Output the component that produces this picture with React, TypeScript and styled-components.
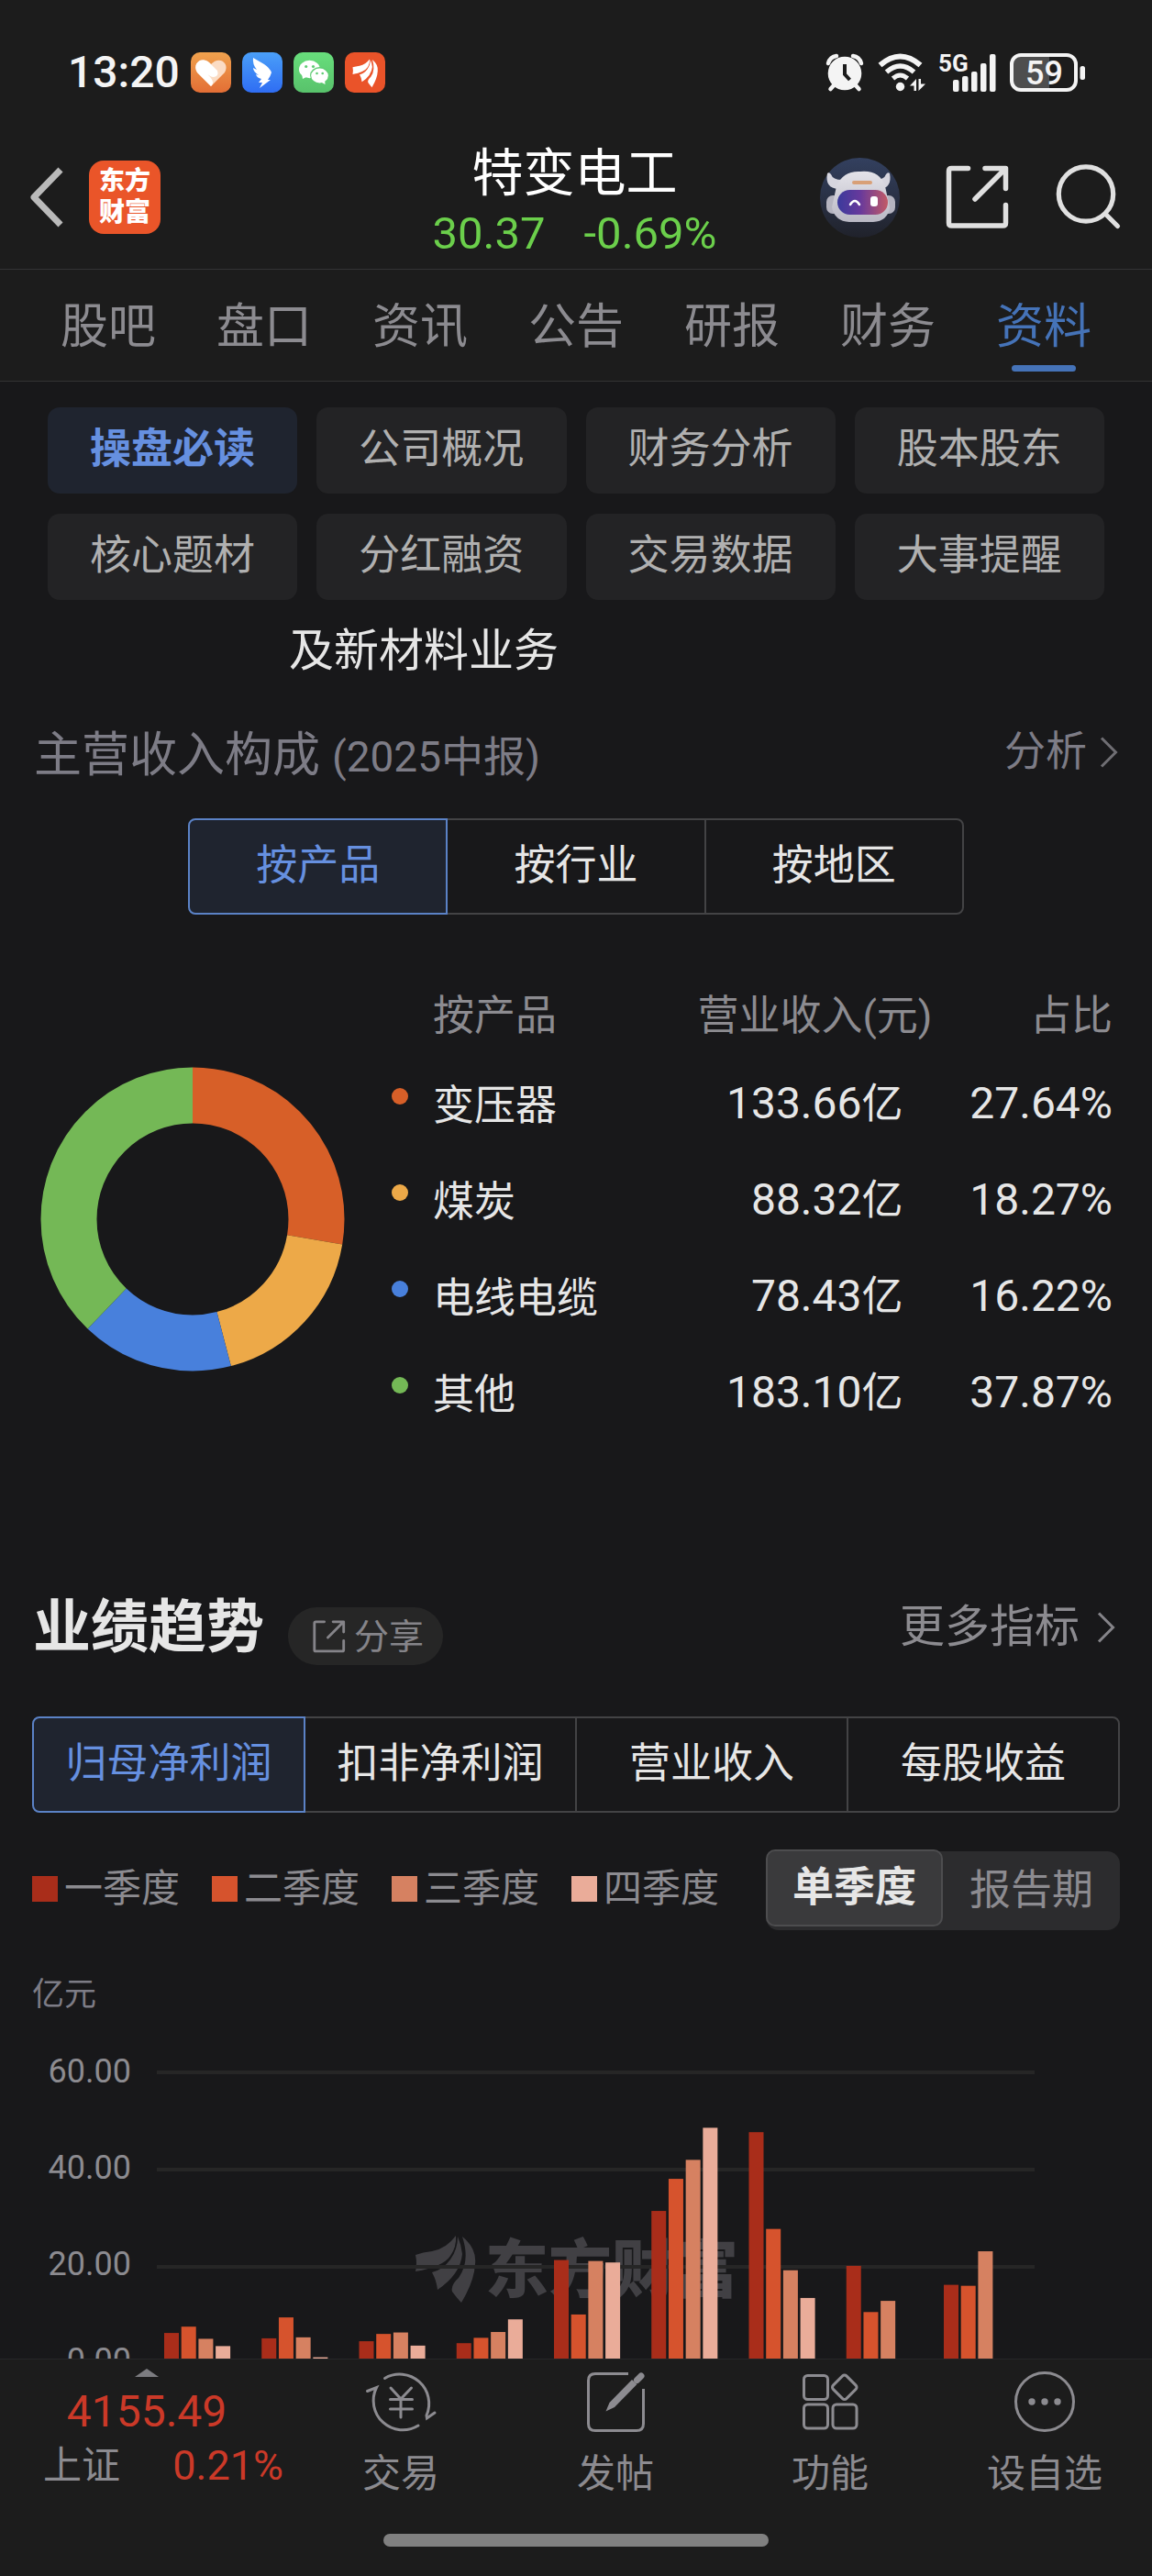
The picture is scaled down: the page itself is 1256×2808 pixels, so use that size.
import React, { useState } from "react";
import styled, { createGlobalStyle } from "styled-components";

const color = {
  page: "#18181a",
  bar: "#1c1c1c",
  line: "#333334",
  text: "#e6e6e6",
  muted: "#8c8b90",
  dim: "#7d7c86",
  blue: "#6690e0",
  blueBg: "#1f242f",
  green: "#6bcf4b",
  red: "#cb3928",
  quarters: ["#a92d1a", "#d6532d", "#d68161", "#eaac99"],
};

const GlobalStyle = createGlobalStyle`
  * { box-sizing: border-box; }
  body {
    margin: 0;
    background: ${color.page};
    color: ${color.text};
    font-family: Roboto, "Noto Sans CJK SC", sans-serif;
  }
  button {
    margin: 0;
    padding: 0;
    border: 0;
    background: none;
    color: inherit;
    font: inherit;
    cursor: pointer;
  }
  a { color: inherit; text-decoration: none; }
  svg { display: block; flex: none; overflow: visible; }
`;

const Screen = styled.div`
  display: flex;
  flex-direction: column;
  height: 100vh;
`;

const TopArea = styled.header`
  background: ${color.bar};
`;

const StatusBar = styled.div`
  display: flex;
  align-items: center;
  justify-content: space-between;
  height: 157px;
  padding: 0 73px 0 74px;
`;

const StatusGroup = styled.div<{ $gap: number }>`
  display: flex;
  align-items: center;
  gap: ${(p) => p.$gap}px;
`;

const Clock = styled.time`
  font-size: 48px;
  line-height: 56px;
  font-weight: 500;
  color: #f4f4f4;
`;

const TitleBar = styled.div`
  display: grid;
  grid-template-columns: 1fr auto 1fr;
  height: 137px;
  padding: 0 35px 0 32px;
  border-bottom: 1px solid ${color.line};
`;

const TitleSide = styled.div<{ $end?: boolean }>`
  display: flex;
  align-items: center;
  justify-content: ${(p) => (p.$end ? "flex-end" : "flex-start")};
  gap: ${(p) => (p.$end ? 50 : 29)}px;
  height: 116px;
`;

const BrandLink = styled.a`
  display: grid;
  place-content: center;
  width: 78px;
  height: 80px;
  border-radius: 16px;
  background: #ea5529;
  color: #fff;
  font-size: 28px;
  line-height: 34px;
  font-weight: 900;
  text-align: center;
`;

const StockName = styled.h1`
  margin: 0;
  font-size: 56px;
  line-height: 65px;
  font-weight: 400;
  color: #fff;
  text-align: center;
`;

const Quote = styled.div`
  display: flex;
  justify-content: center;
  gap: 42px;
  font-size: 49px;
  line-height: 65px;
  color: ${color.green};
`;

const TabBar = styled.nav`
  display: flex;
  height: 122px;
  padding: 0 33px;
  border-bottom: 1px solid ${color.line};
`;

const Tab = styled.button<{ $active: boolean }>`
  position: relative;
  flex: 1;
  padding-top: 4px;
  font-size: 52px;
  line-height: 60px;
  color: ${(p) => (p.$active ? "#4573b8" : color.muted)};

  &::after {
    content: "";
    display: ${(p) => (p.$active ? "block" : "none")};
    position: absolute;
    left: 50%;
    bottom: 10px;
    width: 70px;
    height: 7px;
    margin-left: -35px;
    border-radius: 4px;
    background: #4573b8;
  }
`;

const Main = styled.main`
  flex: 1;
  min-height: 0;
  overflow: hidden;
`;

const ChipGrid = styled.div`
  display: grid;
  grid-template-columns: repeat(4, 1fr);
  gap: 22px 21px;
  padding: 28px 52px 0;
`;

const Chip = styled.button<{ $active: boolean }>`
  height: 94px;
  padding-bottom: 2px;
  border-radius: 13px;
  background: ${(p) => (p.$active ? color.blueBg : "#232325")};
  color: ${(p) => (p.$active ? color.blue : "#b0b0b0")};
  font-size: 45px;
  line-height: 60px;
  font-weight: ${(p) => (p.$active ? 700 : 400)};
`;

const Business = styled.p`
  margin: 22px 36px 0 315px;
  font-size: 49px;
  line-height: 68px;
`;

const SectionHead = styled.div`
  display: flex;
  align-items: flex-start;
  justify-content: space-between;
  height: 68px;
  margin-top: 46px;
  padding: 0 37px;
`;

const SubTitle = styled.h2`
  margin: 0;
  font-size: 52px;
  line-height: 68px;
  font-weight: 400;
  color: ${color.dim};

  small { font-size: 46px; line-height: 1; }
`;

const MoreLink = styled.a<{ $large?: boolean }>`
  display: flex;
  align-items: center;
  gap: ${(p) => (p.$large ? 19 : 14)}px;
  font-size: ${(p) => (p.$large ? 49 : 45)}px;
  line-height: 60px;
  color: ${(p) => (p.$large ? color.muted : color.dim)};
`;

const Segments = styled.div<{ $inset: number; $top: number }>`
  display: flex;
  height: 105px;
  margin: ${(p) => p.$top}px ${(p) => p.$inset}px 0;
`;

const Segment = styled.button<{ $active: boolean }>`
  position: relative;
  z-index: ${(p) => (p.$active ? 1 : 0)};
  flex: 1;
  padding-bottom: 2px;
  border: 2px solid ${(p) => (p.$active ? "#5b82c6" : "#434345")};
  background: ${(p) => (p.$active ? color.blueBg : "transparent")};
  color: ${(p) => (p.$active ? color.blue : color.text)};
  font-size: 45px;
  line-height: 60px;

  & + & { margin-left: -2px; }
  &:first-child { border-radius: 8px 0 0 8px; }
  &:last-child { border-radius: 0 8px 8px 0; }
`;

const Composition = styled.section`
  display: flex;
  align-items: flex-start;
  gap: 51px;
  margin-top: 65px;
  padding: 0 43px 0 44px;
`;

const DonutWrap = styled.div`
  padding-top: 101px;
`;

const Table = styled.table`
  flex: 1;
  table-layout: fixed;
  border-collapse: collapse;
  font-size: 45px;
  line-height: 48px;

  th, td { padding: 0; text-align: right; font-weight: 400; }
  th { height: 91px; color: ${color.muted}; }
  td { height: 105px; font-size: 48px; }
  td:not(:first-child) { padding-bottom: 5px; }
  th:first-child { width: 35%; padding-left: 45px; text-align: left; }
  th:nth-child(2) { width: 40%; }
  td:nth-child(2) { padding-right: 32px; }
`;

const Unit = styled.span`
  font-size: 45px;
  line-height: 1;
`;

const Product = styled.div`
  display: flex;
  align-items: flex-start;
  gap: 27px;
  font-size: 45px;
`;

const Dot = styled.i<{ $color: string }>`
  width: 18px;
  height: 18px;
  margin-top: 4px;
  border-radius: 50%;
  background: ${(p) => p.$color};
`;

const TrendHead = styled.div`
  display: flex;
  align-items: center;
  justify-content: space-between;
  height: 82px;
  margin-top: 160px;
  padding: 0 40px 0 36px;
`;

const TrendTitle = styled.div`
  display: flex;
  align-items: flex-end;
  gap: 26px;
`;

const Heading = styled.h2`
  margin: 0;
  font-size: 63px;
  line-height: 82px;
  font-weight: 700;
`;

const ShareButton = styled.button`
  display: flex;
  align-items: center;
  gap: 9px;
  height: 63px;
  padding: 0 21px 0 27px;
  border-radius: 32px;
  background: #262626;
  color: #858489;
  font-size: 38px;
  line-height: 60px;
`;

const LegendRow = styled.div`
  display: flex;
  align-items: center;
  justify-content: space-between;
  margin-top: 42px;
  padding: 0 35px;
`;

const Legend = styled.ul`
  display: flex;
  gap: 35px;
  margin: 0;
  padding: 0 0 4px;
  list-style: none;
`;

const LegendItem = styled.li<{ $color: string }>`
  display: flex;
  align-items: center;
  gap: 7px;
  font-size: 42px;
  line-height: 60px;
  color: ${color.muted};

  &::before {
    content: "";
    width: 28px;
    height: 28px;
    background: ${(p) => p.$color};
  }
`;

const Toggle = styled.div`
  display: flex;
  align-items: flex-start;
  width: 386px;
  height: 86px;
  border-radius: 14px;
  background: #2c2c2e;
`;

const ToggleButton = styled.button<{ $active: boolean }>`
  width: 50%;
  height: ${(p) => (p.$active ? 84 : 86)}px;
  margin-top: ${(p) => (p.$active ? -2 : 0)}px;
  border: ${(p) => (p.$active ? "2px solid #4d4d4f" : "0")};
  border-radius: 10px;
  background: ${(p) => (p.$active ? "#3a3a3c" : "transparent")};
  color: ${(p) => (p.$active ? color.text : color.muted)};
  font-size: 45px;
  line-height: 60px;
  font-weight: ${(p) => (p.$active ? 700 : 400)};
`;

const AxisUnit = styled.p`
  margin: 46px 35px 0;
  font-size: 35px;
  line-height: 50px;
  color: ${color.dim};
`;

const ChartWrap = styled.div`
  padding: 0 35px;

  svg { width: 100%; height: auto; }
  text { font-family: Roboto, "Noto Sans CJK SC", sans-serif; }
`;

const BottomBar = styled.footer`
  height: 237px;
  border-top: 1px solid #262628;
  background: ${color.bar};
`;

const BottomItems = styled.nav`
  display: flex;
  height: 190px;
`;

const IndexButton = styled.button`
  display: flex;
  flex-direction: column;
  align-items: center;
  width: 320px;
  padding-top: 10px;
  font-size: 48px;
  line-height: 60px;
  color: ${color.red};

  svg { margin-bottom: 8px; }
`;

const IndexRow = styled.span`
  display: flex;
  justify-content: space-between;
  align-self: stretch;
  padding: 0 11px 0 47px;
  font-size: 45px;
  line-height: 58px;
`;

const IndexName = styled.span`
  font-size: 42px;
  color: ${color.muted};
`;

const BottomItem = styled.button`
  display: flex;
  flex: 1;
  flex-direction: column;
  align-items: center;
  gap: 15px;
  padding-top: 12px;
  font-size: 42px;
  line-height: 60px;
  color: ${color.muted};
`;

const HomeIndicator = styled.div`
  width: 33.4%;
  height: 14px;
  margin: 0 auto;
  border-radius: 7px;
  background: #808080;
`;

/* ---------- icons ---------- */

const FEATHERS = [
  "M0 21Q8 18 18 17Q34 14 44 0Q45 12 38 22Q30 34 0 39Q2 30 0 21Z",
  "M46 1Q50 10 51 20Q49 42 24 59Q23 49 18 40Q30 37 38 26Q46 15 46 1Z",
  "M51 1Q67 14 65 31Q64 50 50 73Q46 69 40 61Q38 54 47 46Q60 28 51 1Z",
];

const AppIcons = () => (
  <>
    <svg width="44" height="44" viewBox="0 0 44 44">
      <defs>
        <linearGradient id="health" x1="0" y1="0" x2="0" y2="1">
          <stop offset="0" stopColor="#f0a24e" />
          <stop offset="1" stopColor="#e36e35" />
        </linearGradient>
      </defs>
      <rect width="44" height="44" rx="10" fill="url(#health)" />
      <path d="M22 37L7 22C1 12 13 3 22 13C31 3 43 12 37 22Z" fill="#fbdcc4" />
      <path d="M22 37L7 22C1 12 12 4 20 11L29 20Q31 26 25 27Q21 27 16 22Q28 32 22 37Z" fill="#fff" />
    </svg>
    <svg width="44" height="44" viewBox="0 0 44 44">
      <defs>
        <linearGradient id="wing" x1="0" y1="0" x2="0" y2="1">
          <stop offset="0" stopColor="#4a9ff8" />
          <stop offset="1" stopColor="#2f6df3" />
        </linearGradient>
      </defs>
      <rect width="44" height="44" rx="10" fill="url(#wing)" />
      <path
        d="M12 6L24 13Q30 17 32 22Q31 26 28 30H31L19 39L22 33H18L21 29Q16 28 15 24L18 25Q12 21 12 17L16 19Q11 13 12 6Z"
        fill="#fff"
      />
    </svg>
    <svg width="44" height="44" viewBox="0 0 44 44">
      <defs>
        <linearGradient id="chat" x1="0" y1="0" x2="0" y2="1">
          <stop offset="0" stopColor="#68de7c" />
          <stop offset="1" stopColor="#58c26b" />
        </linearGradient>
      </defs>
      <rect width="44" height="44" rx="10" fill="url(#chat)" />
      <path d="M9 23L10 29L16 26Z" fill="#fff" />
      <ellipse cx="17.500" cy="18.500" rx="11.500" ry="9.700" fill="#fff" />
      <ellipse cx="28.500" cy="25" rx="10.500" ry="9" fill="#5fcc73" />
      <path d="M29 32L34.500 35L34 29Z" fill="#fff" />
      <ellipse cx="28.500" cy="25.500" rx="9.300" ry="7.900" fill="#fff" />
      <g fill="#5fcc73">
        <circle cx="13.700" cy="15.500" r="1.600" />
        <circle cx="21.500" cy="15.500" r="1.600" />
        <circle cx="25.500" cy="23" r="1.300" />
        <circle cx="31.700" cy="23" r="1.300" />
      </g>
    </svg>
    <svg width="44" height="44" viewBox="0 0 44 44">
      <rect width="44" height="44" rx="10" fill="#ea5329" />
      <g transform="translate(8.500 7.500) scale(.42)" fill="#fff">
        {FEATHERS.map((d) => <path key={d} d={d} />)}
      </g>
    </svg>
  </>
);

const AlarmIcon = () => (
  <svg width="40" height="42" viewBox="0 0 40 42" fill="none" stroke="#f4f4f4">
    <circle cx="20" cy="22" r="18.300" fill="#f4f4f4" stroke="none" />
    <path d="M2 11Q4 4 11 3" strokeWidth="4.500" strokeLinecap="round" />
    <path d="M38 11Q36 4 29 3" strokeWidth="4.500" strokeLinecap="round" />
    <path d="M9 34L4.500 39M31 34L35.500 39" strokeWidth="4.500" strokeLinecap="round" />
    <path d="M20 12V23L25.500 29" stroke="#1c1c1c" strokeWidth="4" />
  </svg>
);

const WifiIcon = () => (
  <svg width="52" height="42" viewBox="0 0 52 42" fill="none" stroke="#f4f4f4">
    <path d="M2.500 13Q24.500 -6 46.500 13" strokeWidth="6" />
    <path d="M9.500 20.500Q24.500 7.500 39.500 20.500" strokeWidth="5.500" />
    <path d="M16.500 27.500Q24.500 20.500 32.500 27.500" strokeWidth="5" />
    <circle cx="24.500" cy="36.500" r="4.700" fill="#f4f4f4" stroke="none" />
    <path d="M42 41V28L35 35.500H39.500V41ZM44.500 28V41L52 33.500H47V28Z" fill="#f4f4f4" stroke="none" />
  </svg>
);

const SignalIcon = () => (
  <svg width="60" height="42" viewBox="0 0 60 42" fill="#f4f4f4">
    <text x="-2" y="20" fontSize="26" fontWeight="700">
      5G
    </text>
    {[29, 25, 20, 11, 1].map((y, i) => (
      <rect key={y} x={14 + i * 10} y={y} width="6.500" height={42 - y} rx="2" />
    ))}
  </svg>
);

const BatteryIcon = () => (
  <svg width="82" height="42" viewBox="0 0 82 42">
    <path d="M12 2H43V40H12Q2 40 2 30V12Q2 2 12 2Z" fill="#4e4e4e" />
    <rect x="2" y="2" width="70" height="38" rx="10" fill="none" stroke="#f4f4f4" strokeWidth="4" />
    <rect x="76.500" y="14" width="5.500" height="15" rx="2.500" fill="#f4f4f4" />
    <text x="37.500" y="34" fontSize="36" fontWeight="500" textAnchor="middle" fill="#f4f4f4">
      59
    </text>
  </svg>
);

const BackIcon = () => (
  <svg width="36" height="66" viewBox="0 0 36 66" fill="none" stroke="#bababa" strokeWidth="7">
    <path d="M34 3L5 33L34 63" strokeLinejoin="round" />
  </svg>
);

const RobotIcon = () => (
  <svg width="87" height="87" viewBox="0 0 87 87">
    <defs>
      <linearGradient id="sky" x1="0" y1="0" x2="0" y2="1">
        <stop offset="0" stopColor="#33405f" />
        <stop offset="1" stopColor="#20222b" />
      </linearGradient>
      <linearGradient id="visor" x1="0" y1="0" x2="1" y2="0">
        <stop offset="0" stopColor="#3b3a9c" />
        <stop offset=".45" stopColor="#67399c" />
        <stop offset="1" stopColor="#c25a66" />
      </linearGradient>
      <linearGradient id="shell" x1="0" y1="0" x2="0" y2="1">
        <stop offset="0" stopColor="#e4e3e9" />
        <stop offset="1" stopColor="#b9b8c4" />
      </linearGradient>
    </defs>
    <circle cx="43.500" cy="43.500" r="43.500" fill="url(#sky)" />
    <path d="M20 34Q5 33 8 17Q10 15 12 18Q14 24 24 24ZM65 34Q79 33 76 17Q74 15 72 18Q70 24 60 24Z" fill="#d6d5de" />
    <rect x="7" y="41" width="15" height="20" rx="7" fill="#b5b4c0" />
    <rect x="67" y="41" width="15" height="20" rx="7" fill="#b5b4c0" />
    <path d="M44 15Q65 13 71 31L76 54Q74 69 58 70H32Q16 69 13 54L18 31Q25 14 44 15Z" fill="url(#shell)" />
    <path d="M37 27H55" stroke="#d8a077" strokeWidth="4" strokeLinecap="round" />
    <rect x="19" y="35" width="55" height="27" rx="13.500" fill="url(#visor)" />
    <path d="M33 51Q38 43 43 51" fill="none" stroke="#fff" strokeWidth="2.500" strokeLinecap="round" />
    <rect x="55" y="42" width="8" height="11" rx="3" fill="#fff" />
  </svg>
);

const ShareIcon = ({ size, tone }: { size: number; tone: string }) => (
  <svg
    width={size}
    height={size}
    viewBox="0 0 70 70"
    fill="none"
    stroke={tone}
    strokeWidth="5.500"
    strokeLinecap="round"
    strokeLinejoin="round"
  >
    <path d="M24.500 3.500H6.500Q3.500 3.500 3.500 6.500V63Q3.500 66 6.500 66H62.500Q65.500 66 65.500 63V43.500" />
    <path d="M43 3.500H65.500V25.500M32 37L64 5" />
  </svg>
);

const SearchIcon = () => (
  <svg width="70" height="70" viewBox="0 0 70 70" fill="none" stroke="#e0e0e0" strokeWidth="5.200" strokeLinecap="round">
    <circle cx="33" cy="31.500" r="29.700" />
    <path d="M54.500 53.500L67.500 66.500" />
  </svg>
);

const ChevronIcon = ({ tone }: { tone: string }) => (
  <svg width="20" height="34" viewBox="0 0 20 34" fill="none" stroke={tone} strokeWidth="3">
    <path d="M2 1.500L17.500 17L2 32.500" />
  </svg>
);

const bottomIcon = { width: 76, height: 68, viewBox: "0 0 76 68", fill: "none", stroke: color.muted, strokeWidth: 3 } as const;

const TradeIcon = () => (
  <svg {...bottomIcon} strokeLinecap="round">
    <path d="M20.500 8.500A32 32 0 0 1 66 49L66.500 52L75 46" />
    <path d="M1.500 22.500L11.500 18.500A32 32 0 0 0 57 60" />
    <path d="M27 19L38 31L49.500 19M38 31V51M26.500 31.500H50.500M26.500 42H50.500" />
  </svg>
);

const PostIcon = () => (
  <svg {...bottomIcon}>
    <path d="M52 3.500H16Q8.500 3.500 8.500 11V58Q8.500 65.500 16 65.500H61Q68.500 65.500 68.500 58V20" />
    <path d="M27.500 44.500L31.500 35L56 10L61.500 15L37 40Z" fill={color.muted} stroke="none" />
    <path d="M61.500 10.500L66 6" strokeWidth="7" strokeLinecap="round" />
  </svg>
);

const FeaturesIcon = () => (
  <svg {...bottomIcon}>
    <rect x="9.500" y="5.500" width="26" height="26" rx="4" />
    <rect x="9.500" y="37" width="26" height="26" rx="4" />
    <rect x="41" y="37" width="26" height="26" rx="4" />
    <rect x="43.500" y="8" width="20.500" height="20.500" rx="3" transform="rotate(45 53.750 18.250)" />
  </svg>
);

const MoreIcon = () => (
  <svg {...bottomIcon}>
    <circle cx="38" cy="34" r="31.500" />
    {[24, 38, 52].map((x) => (
      <circle key={x} cx={x} cy="34" r="3.700" fill={color.muted} stroke="none" />
    ))}
  </svg>
);

/* ---------- data ---------- */

const tabs = ["股吧", "盘口", "资讯", "公告", "研报", "财务", "资料"];
const chips = ["操盘必读", "公司概况", "财务分析", "股本股东", "核心题材", "分红融资", "交易数据", "大事提醒"];
const groupings = ["按产品", "按行业", "按地区"];
const metrics = ["归母净利润", "扣非净利润", "营业收入", "每股收益"];
const quarterNames = ["一季度", "二季度", "三季度", "四季度"];

const products = [
  { name: "变压器", revenue: "133.66", share: 27.64, color: "#d75f28" },
  { name: "煤炭", revenue: "88.32", share: 18.27, color: "#eda948" },
  { name: "电线电缆", revenue: "78.43", share: 16.22, color: "#4880dc" },
  { name: "其他", revenue: "183.10", share: 37.87, color: "#74b856" },
];

const profits = [
  [6.4, 7.7, 5.2, 3.7],
  [5.3, 9.6, 5.5, 1.4],
  [4.7, 6.2, 6.5, 3.8],
  [4.3, 5.4, 6.6, 9.2],
  [21.4, 10.2, 21.2, 20.9],
  [31.5, 38.1, 42, 48.6],
  [47.7, 27.8, 19.3, 13.6],
  [20.2, 10.7, 13],
  [16.3, 16.1, 23.2],
];

/* ---------- charts ---------- */

const Donut = () => {
  const radius = 135;
  const length = 2 * Math.PI * radius;
  let start = 0;
  return (
    <svg width="332" height="332" viewBox="0 0 332 332" role="img" aria-label="主营收入构成">
      <g fill="none" strokeWidth="61" transform="rotate(-90 166 166)">
        {products.map((item) => {
          const offset = start;
          start += item.share;
          return (
            <circle
              key={item.name}
              cx="166"
              cy="166"
              r={radius}
              stroke={item.color}
              strokeDasharray={`${(item.share / 100) * length} ${length}`}
              strokeDashoffset={(-offset / 100) * length}
            />
          );
        })}
      </g>
    </svg>
  );
};

const BASELINE = 377;
const UNIT = 5.3;

const ProfitChart = () => (
  <ChartWrap>
    <svg viewBox="0 0 1186 400" role="img" aria-label="归母净利润">
      <g fill="#414044">
        <g transform="translate(418 237)">
          {FEATHERS.map((d) => <path key={d} d={d} />)}
        </g>
        <text x="494" y="299" fontSize="69" fontWeight="900">东方财富</text>
      </g>
      {[60, 40, 20, 0].map((value) => (
        <g key={value}>
          <rect x="136" y={BASELINE - value * UNIT - 2} width="957" height="4" fill="#262626" />
          <text x="108" y={BASELINE + 8 - value * 5.25} fontSize="36" textAnchor="end" fill={color.muted}>
            {value.toFixed(2)}
          </text>
        </g>
      ))}
      {profits.map((year, g) =>
        year.map((value, q) => (
          <rect
            key={`${g}-${q}`}
            x={144 + g * 106.25 + q * 18.7}
            y={BASELINE - value * UNIT}
            width="16"
            height={value * UNIT}
            fill={color.quarters[q]}
          />
        ))
      )}
    </svg>
  </ChartWrap>
);

/* ---------- page ---------- */

export default function App() {
  const [tab, setTab] = useState("资料");
  const [chip, setChip] = useState("操盘必读");
  const [grouping, setGrouping] = useState("按产品");
  const [metric, setMetric] = useState("归母净利润");
  const [period, setPeriod] = useState("单季度");

  return (
    <Screen>
      <GlobalStyle />
      <TopArea>
        <StatusBar>
          <StatusGroup $gap={12}>
            <Clock>13:20</Clock>
            <AppIcons />
          </StatusGroup>
          <StatusGroup $gap={16}>
            <AlarmIcon />
            <WifiIcon />
            <SignalIcon />
            <BatteryIcon />
          </StatusGroup>
        </StatusBar>
        <TitleBar>
          <TitleSide>
            <button aria-label="返回"><BackIcon /></button>
            <BrandLink href="#home">东方<br />财富</BrandLink>
          </TitleSide>
          <div>
            <StockName>特变电工</StockName>
            <Quote>
              <span>30.37</span>
              <span>-0.69%</span>
            </Quote>
          </div>
          <TitleSide $end>
            <button aria-label="智能助手"><RobotIcon /></button>
            <button aria-label="分享"><ShareIcon size={70} tone="#e0e0e0" /></button>
            <button aria-label="搜索"><SearchIcon /></button>
          </TitleSide>
        </TitleBar>
        <TabBar>
          {tabs.map((name) => (
            <Tab key={name} $active={name === tab} onClick={() => setTab(name)}>{name}</Tab>
          ))}
        </TabBar>
      </TopArea>

      <Main>
        <ChipGrid>
          {chips.map((name) => (
            <Chip key={name} $active={name === chip} onClick={() => setChip(name)}>{name}</Chip>
          ))}
        </ChipGrid>
        <Business>及新材料业务</Business>

        <SectionHead>
          <SubTitle>主营收入构成 <small>(2025中报)</small></SubTitle>
          <MoreLink href="#analysis">分析<ChevronIcon tone="#6f6e73" /></MoreLink>
        </SectionHead>
        <Segments $inset={205} $top={34}>
          {groupings.map((name) => (
            <Segment key={name} $active={name === grouping} onClick={() => setGrouping(name)}>{name}</Segment>
          ))}
        </Segments>

        <Composition>
          <DonutWrap><Donut /></DonutWrap>
          <Table>
            <thead>
              <tr><th>按产品</th><th>营业收入(元)</th><th>占比</th></tr>
            </thead>
            <tbody>
              {products.map((item) => (
                <tr key={item.name}>
                  <td><Product><Dot $color={item.color} />{item.name}</Product></td>
                  <td>{item.revenue}<Unit>亿</Unit></td>
                  <td>{item.share.toFixed(2)}%</td>
                </tr>
              ))}
            </tbody>
          </Table>
        </Composition>

        <TrendHead>
          <TrendTitle>
            <Heading>业绩趋势</Heading>
            <ShareButton><ShareIcon size={36} tone="#858489" />分享</ShareButton>
          </TrendTitle>
          <MoreLink $large href="#metrics">更多指标<ChevronIcon tone="#858489" /></MoreLink>
        </TrendHead>
        <Segments $inset={35} $top={56}>
          {metrics.map((name) => (
            <Segment key={name} $active={name === metric} onClick={() => setMetric(name)}>{name}</Segment>
          ))}
        </Segments>

        <LegendRow>
          <Legend>
            {quarterNames.map((name, i) => (
              <LegendItem key={name} $color={color.quarters[i]}>{name}</LegendItem>
            ))}
          </Legend>
          <Toggle>
            {["单季度", "报告期"].map((name) => (
              <ToggleButton key={name} $active={name === period} onClick={() => setPeriod(name)}>{name}</ToggleButton>
            ))}
          </Toggle>
        </LegendRow>
        <AxisUnit>亿元</AxisUnit>
        <ProfitChart />
      </Main>

      <BottomBar>
        <BottomItems>
          <IndexButton>
            <svg width="26" height="9" viewBox="0 0 26 9"><path d="M0 9L13 0L26 9Z" fill="#7c7c80" /></svg>
            <span>4155.49</span>
            <IndexRow><IndexName>上证</IndexName><span>0.21%</span></IndexRow>
          </IndexButton>
          <BottomItem><TradeIcon />交易</BottomItem>
          <BottomItem><PostIcon />发帖</BottomItem>
          <BottomItem><FeaturesIcon />功能</BottomItem>
          <BottomItem><MoreIcon />设自选</BottomItem>
        </BottomItems>
        <HomeIndicator />
      </BottomBar>
    </Screen>
  );
}
